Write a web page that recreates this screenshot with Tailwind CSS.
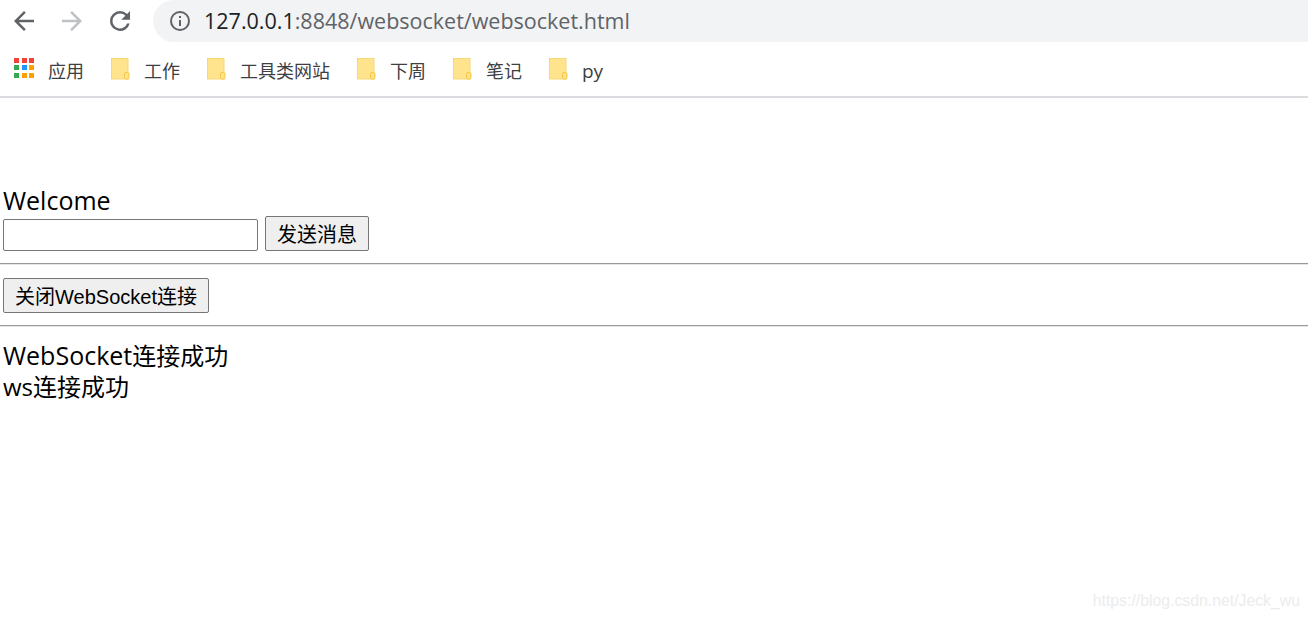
<!DOCTYPE html>
<html>
<head>
    <meta charset="UTF-8">
    <title>websocket</title>
    <script src="https://cdn.jsdelivr.net/npm/@tailwindcss/browser@4"></script>
</head>
<body class="relative h-[619px] w-[1308px] overflow-hidden bg-white font-['Open_Sans','Noto_Sans_CJK_SC',sans-serif] text-black">
    <header class="h-[98px] border-b-2 border-[#dadce0]">
        <div class="flex h-[42px] items-center">
            <div class="flex w-[153px] items-center pl-[9px]">
                <svg class="h-[30px] w-[30px]" viewBox="0 0 24 24" fill="#5f6368"><path d="M20 11H7.83l5.59-5.59L12 4l-8 8 8 8 1.41-1.41L7.83 13H20z"/></svg>
                <svg class="ml-[18px] h-[30px] w-[30px]" viewBox="0 0 24 24" fill="#bdc1c6"><path d="M4 11h12.17l-5.59-5.59L12 4l8 8-8 8-1.41-1.41L16.17 13H4z"/></svg>
                <svg class="ml-[18px] h-[30px] w-[30px]" viewBox="0 0 24 24" fill="#5f6368"><path d="M17.65 6.35A7.96 7.96 0 0 0 12 4a8 8 0 1 0 7.73 10h-2.08A6 6 0 1 1 12 6c1.66 0 3.14.69 4.22 1.78L13 11h7V4z"/></svg>
            </div>
            <div class="flex h-[42px] flex-1 items-center rounded-l-[21px] bg-[#f1f3f4] pl-[15px]">
                <svg class="h-[24px] w-[24px]" viewBox="0 0 24 24" fill="#5f6368"><path d="M11 7h2v2h-2zm0 4h2v6h-2zm1-9a10 10 0 1 0 0 20 10 10 0 0 0 0-20zm0 18a8 8 0 1 1 0-16 8 8 0 0 1 0 16z"/></svg>
                <span class="ml-[12px] text-[21.5px] text-[#5f6368]"><span class="text-[#202124]">127.0.0.1</span>:8848/websocket/websocket.html</span>
            </div>
        </div>
        <nav class="flex h-[54px] items-center text-[18px] text-[#3c4043]">
            <div class="flex w-[111px] items-center pl-[14px]">
                <div class="mb-[3px] grid w-[20px] grid-cols-3 gap-[2.5px]">
                    <i class="h-[5px] w-[5px] bg-[#f44336]"></i><i class="h-[5px] w-[5px] bg-[#f44336]"></i><i class="h-[5px] w-[5px] bg-[#f44336]"></i>
                    <i class="h-[5px] w-[5px] bg-[#34a853]"></i><i class="h-[5px] w-[5px] bg-[#2196f3]"></i><i class="h-[5px] w-[5px] bg-[#ffa000]"></i>
                    <i class="h-[5px] w-[5px] bg-[#34a853]"></i><i class="h-[5px] w-[5px] bg-[#ffa000]"></i><i class="h-[5px] w-[5px] bg-[#ffa000]"></i>
                </div>
                <span class="ml-[14px] mt-[4px]">应用</span>
            </div>
            <div class="flex w-[96px] items-center">
                <svg class="h-[22px] w-[19px]" viewBox="0 0 19 22"><rect x=".5" y=".5" width="16.5" height="20.5" fill="#ffe48d" stroke="#f8d775"/><rect x="13.5" y="14.5" width="4.5" height="6.5" rx="1.5" fill="#ffe48d" stroke="#f5c842"/></svg>
                <span class="ml-[14px] mt-[4px]">工作</span>
            </div>
            <div class="flex w-[150px] items-center">
                <svg class="h-[22px] w-[19px]" viewBox="0 0 19 22"><rect x=".5" y=".5" width="16.5" height="20.5" fill="#ffe48d" stroke="#f8d775"/><rect x="13.5" y="14.5" width="4.5" height="6.5" rx="1.5" fill="#ffe48d" stroke="#f5c842"/></svg>
                <span class="ml-[14px] mt-[4px]">工具类网站</span>
            </div>
            <div class="flex w-[96px] items-center">
                <svg class="h-[22px] w-[19px]" viewBox="0 0 19 22"><rect x=".5" y=".5" width="16.5" height="20.5" fill="#ffe48d" stroke="#f8d775"/><rect x="13.5" y="14.5" width="4.5" height="6.5" rx="1.5" fill="#ffe48d" stroke="#f5c842"/></svg>
                <span class="ml-[14px] mt-[4px]">下周</span>
            </div>
            <div class="flex w-[96px] items-center">
                <svg class="h-[22px] w-[19px]" viewBox="0 0 19 22"><rect x=".5" y=".5" width="16.5" height="20.5" fill="#ffe48d" stroke="#f8d775"/><rect x="13.5" y="14.5" width="4.5" height="6.5" rx="1.5" fill="#ffe48d" stroke="#f5c842"/></svg>
                <span class="ml-[14px] mt-[4px]">笔记</span>
            </div>
            <div class="flex items-center">
                <svg class="h-[22px] w-[19px]" viewBox="0 0 19 22"><rect x=".5" y=".5" width="16.5" height="20.5" fill="#ffe48d" stroke="#f8d775"/><rect x="13.5" y="14.5" width="4.5" height="6.5" rx="1.5" fill="#ffe48d" stroke="#f5c842"/></svg>
                <span class="ml-[14px] mt-[4px] text-[19px]">py</span>
            </div>
        </nav>
    </header>

    <main class="pt-[87px] text-[24px] leading-[31px]">
        <div class="h-[31px] pl-[3px] text-[25px]">Welcome</div>
        <div class="mt-[3px] flex h-[32px] items-end pl-[3px]">
            <input type="text" class="h-[32px] w-[255px] rounded-[2px] border border-[#767676] bg-white">
            <button class="ml-[7px] h-[35px] w-[104px] rounded-[2px] border border-[#767676] bg-[#efefef] pt-[3px] font-['Liberation_Sans','Noto_Sans_CJK_SC',sans-serif] text-[20px]">发送消息</button>
        </div>
        <hr class="mt-[12px] border-t border-b border-t-[#999999] border-b-[#e6e6e6]">
        <div class="mt-[13px] pl-[3px]">
            <button class="block h-[35px] w-[206px] rounded-[2px] border border-[#767676] bg-[#efefef] pt-[2px] font-['Liberation_Sans','Noto_Sans_CJK_SC',sans-serif] text-[20px] leading-none">关闭WebSocket连接</button>
        </div>
        <hr class="mt-[12px] border-t border-b border-t-[#999999] border-b-[#e6e6e6]">
        <div class="mt-[13px] h-[31px] pl-[3px]"><span class="text-[25px]">WebSocket</span>连接成功</div>
        <div class="pl-[3px]">ws连接成功</div>
    </main>

    <div class="absolute bottom-[8px] right-[8px] font-['Liberation_Sans',sans-serif] text-[15.8px] leading-5 text-[#ececec]">https://blog.csdn.net/Jeck_wu</div>
</body>
</html>
